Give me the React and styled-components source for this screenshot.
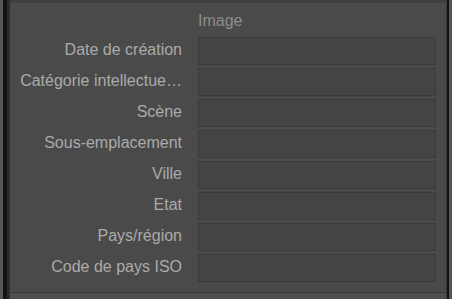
import React from "react";
import styled, { createGlobalStyle } from "styled-components";

const Global = createGlobalStyle`
  html, body { margin: 0; padding: 0; background: #4d4d4d; }
  body { width: 452px; height: 299px; overflow: hidden; font-family: "Liberation Sans", Arial, sans-serif; }
`;

const Frame = styled.div`
  display: flex;
  width: 452px;
  height: 299px;
`;

const Strip = styled.div`
  width: ${(p) => p.w}px;
  background: ${(p) => p.c};
  flex: none;
`;

const Column = styled.div`
  flex: 1;
  display: flex;
  flex-direction: column;
  min-width: 0;
`;

const Panel = styled.div`
  flex: 1;
  background: #4a4a4a;
  border-top: 3px solid #404040;
  border-bottom: 1px solid #393939;
  padding: 8px 10px 0 0;
  display: grid;
  grid-template-columns: 172px 238px;
  column-gap: 16px;
  row-gap: 3px;
  align-content: start;
`;

const Footer = styled.div`
  height: 6px;
  background: #4e4e4e;
`;

const Header = styled.div`
  grid-column: 2;
  font-size: 16px;
  line-height: 20px;
  color: #8d8d8d;
  margin-bottom: 3px;
`;

const Label = styled.div`
  grid-column: 1;
  font-size: 16px;
  line-height: 26px;
  color: #ababab;
  text-align: right;
  white-space: nowrap;
  overflow: hidden;
  align-self: start;
`;

const Field = styled.div`
  grid-column: 2;
  height: 28px;
  box-sizing: border-box;
  background: #444444;
  border: 1px solid #3a3a3a;
`;

const labels = [
  "Date de création",
  "Catégorie intellectue…",
  "Scène",
  "Sous-emplacement",
  "Ville",
  "Etat",
  "Pays/région",
  "Code de pays ISO",
];

export default function App() {
  return (
    <>
      <Global />
      <Frame>
        <Strip w={3} c="#565656" />
        <Strip w={4} c="#141414" />
        <Strip w={3} c="#2c2c2c" />
        <Column>
          <Panel>
            <Header>Image</Header>
            {labels.map((l) => (
              <React.Fragment key={l}>
                <Label>{l}</Label>
                <Field />
              </React.Fragment>
            ))}
          </Panel>
          <Footer />
        </Column>
        <Strip w={1} c="#3a3a3a" />
        <Strip w={2} c="#141414" />
        <Strip w={3} c="#565656" />
      </Frame>
    </>
  );
}
